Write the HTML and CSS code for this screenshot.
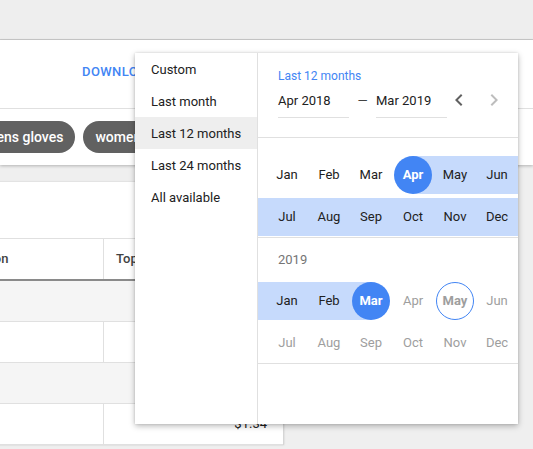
FILE: index.html
```html
<!DOCTYPE html>
<html>
<head>
<meta charset="utf-8">
<link rel="stylesheet" href="styles.css">
</head>
<body>
<div class="topbar"></div>
<div class="card1">
  <div class="card1-head"><span class="download">DOWNLOAD</span></div>
  <div class="chips">
    <span class="chip">womens gloves</span>
    <span class="chip">women gloves</span>
  </div>
</div>
<div class="card2">
  <div class="card2-top"></div>
  <div class="trow thead">
    <div class="c1">Description</div>
    <div class="c2">Top</div>
  </div>
  <div class="trow group"></div>
  <div class="trow"><div class="c1"></div><div class="c2"></div></div>
  <div class="trow group"></div>
  <div class="trow"><div class="c1"></div><div class="c2 num">$1.34</div></div>
</div>

<div class="popup">
  <div class="menu">
    <div class="item">Custom</div>
    <div class="item">Last month</div>
    <div class="item active">Last 12 months</div>
    <div class="item">Last 24 months</div>
    <div class="item">All available</div>
  </div>
  <div class="panel">
    <div class="head">
      <div class="label">Last 12 months</div>
      <div class="inputs">
        <div class="field">Apr 2018</div>
        <div class="dash">—</div>
        <div class="field">Mar 2019</div>
        <span class="icon dark"><svg viewBox="0 0 24 24" width="24" height="24"><path d="M15.41 7.41L14 6l-6 6 6 6 1.41-1.41L10.83 12z"/></svg></span>
        <span class="icon light"><svg viewBox="0 0 24 24" width="24" height="24"><path d="M10 6L8.59 7.41 13.17 12l-4.58 4.59L10 18l6-6z"/></svg></span>
      </div>
    </div>
    <div class="scroll">
      <div class="year first">
        <div class="mrow">
          <span class="pad"></span>
          <span class="cell"><span class="m">Jan</span></span>
          <span class="cell"><span class="m">Feb</span></span>
          <span class="cell"><span class="m">Mar</span></span>
          <span class="cell start"><span class="m sel">Apr</span></span>
          <span class="cell in"><span class="m">May</span></span>
          <span class="cell in"><span class="m">Jun</span></span>
        </div>
        <div class="mrow">
          <span class="pad band"></span>
          <span class="cell in"><span class="m">Jul</span></span>
          <span class="cell in"><span class="m">Aug</span></span>
          <span class="cell in"><span class="m">Sep</span></span>
          <span class="cell in"><span class="m">Oct</span></span>
          <span class="cell in"><span class="m">Nov</span></span>
          <span class="cell in"><span class="m">Dec</span></span>
        </div>
      </div>
      <div class="year">
        <div class="ylabel">2019</div>
        <div class="mrow">
          <span class="pad band"></span>
          <span class="cell in"><span class="m">Jan</span></span>
          <span class="cell in"><span class="m">Feb</span></span>
          <span class="cell end"><span class="m sel">Mar</span></span>
          <span class="cell"><span class="m off">Apr</span></span>
          <span class="cell"><span class="m off today">May</span></span>
          <span class="cell"><span class="m off">Jun</span></span>
        </div>
        <div class="mrow">
          <span class="pad"></span>
          <span class="cell"><span class="m off">Jul</span></span>
          <span class="cell"><span class="m off">Aug</span></span>
          <span class="cell"><span class="m off">Sep</span></span>
          <span class="cell"><span class="m off">Oct</span></span>
          <span class="cell"><span class="m off">Nov</span></span>
          <span class="cell"><span class="m off">Dec</span></span>
        </div>
      </div>
    </div>
  </div>
</div>
</body>
</html>
```
FILE: styles.css
```css
* { box-sizing: border-box; }
html, body { margin: 0; padding: 0; }
body {
  width: 533px;
  height: 449px;
  overflow: hidden;
  background: #efefef;
  font-family: Roboto, "Liberation Sans", sans-serif;
  color: #212121;
  position: relative;
}
.topbar {
  height: 40px;
  background: #eeeeee;
  border-bottom: 1px solid #cccccc;
}
.card1 {
  background: #fff;
  height: 125px;
  box-shadow: 0 1px 3px rgba(0,0,0,0.25);
  position: relative;
}
.card1-head {
  height: 69px;
  border-bottom: 1px solid #e0e0e0;
  padding: 24px 0 0 82px;
}
.download {
  display: block;
  font-size: 13px;
  line-height: 16px;
  font-weight: 500;
  color: #4285f4;
  letter-spacing: 0.4px;
}
.chips {
  display: flex;
  gap: 8px;
  padding-top: 12px;
  margin-left: -46px;
  white-space: nowrap;
}
.chip {
  height: 32px;
  line-height: 32px;
  padding: 0 12px;
  border-radius: 16px;
  background: #616161;
  color: #fff;
  font-size: 14px;
  font-weight: 500;
}
.card2 {
  margin-top: 17px;
  margin-left: -70px;
  width: 354px;
  background: #fff;
  border-right: 1px solid #d6d6d6;
  box-shadow: 0 0 2px rgba(0,0,0,0.15);
}
.card2-top {
  height: 57px;
  border-bottom: 1px solid #e0e0e0;
}
.trow {
  display: flex;
  height: 41px;
  border-bottom: 1px solid #e0e0e0;
}
.trow.thead {
  height: 42px;
  border-bottom: 2px solid #8a8a8a;
  font-size: 13px;
  font-weight: 500;
  color: #424242;
}
.trow.group { background: #f5f5f5; }
.c1 {
  width: 174px;
  border-right: 1px solid #e0e0e0;
  padding-left: 12px;
  line-height: 40px;
}
.c2 {
  flex: 1;
  padding: 0 16px 0 12px;
  line-height: 40px;
}
.c2.num { text-align: right; font-size: 13px; }

.popup {
  position: absolute;
  left: 135px;
  top: 53px;
  width: 383px;
  height: 371px;
  background: #fff;
  display: flex;
  box-shadow: 0 2px 6px rgba(0,0,0,0.28), 0 0 2px rgba(0,0,0,0.12);
}
.menu {
  width: 123px;
  border-right: 1px solid #e0e0e0;
}
.item {
  height: 32px;
  line-height: 33px;
  padding-left: 16px;
  font-size: 13px;
  color: #212121;
}
.item.active { background: #eeeeee; }
.panel {
  width: 260px;
  display: flex;
  flex-direction: column;
}
.head {
  height: 85px;
  border-bottom: 1px solid #e0e0e0;
  padding: 15px 12px 0 20px;
}
.label {
  font-size: 12px;
  line-height: 16px;
  color: #4285f4;
}
.inputs {
  display: flex;
  align-items: flex-start;
}
.field {
  width: 71px;
  height: 34px;
  line-height: 33px;
  border-bottom: 1px solid #e0e0e0;
  font-size: 13px;
  color: #212121;
}
.dash {
  width: 27px;
  line-height: 33px;
  text-align: center;
  font-size: 13px;
  color: #424242;
}
.icon {
  width: 24px;
  height: 24px;
  margin-top: 4px;
  display: block;
}
.icon svg { display: block; }
.icon.dark { fill: #616161; }
.icon.light { fill: #bdbdbd; margin-left: 11px; }
.scroll {
  height: 286px;
  overflow: hidden;
}
.year {
  border-bottom: 1px solid #e0e0e0;
  padding-bottom: 1px;
}
.year.first { padding-top: 18px; }
.ylabel {
  height: 44px;
  line-height: 44px;
  padding-left: 20px;
  font-size: 13px;
  color: #757575;
}
.mrow {
  display: flex;
  height: 38px;
}
.mrow + .mrow { margin-top: 4px; }
.pad { width: 8px; flex: none; }
.band { background: #c6dafc; }
.cell {
  width: 42px;
  flex: none;
  height: 38px;
  display: flex;
  justify-content: center;
}
.cell.in { background: #c6dafc; }
.cell.start { background: linear-gradient(to right, transparent 50%, #c6dafc 50%); }
.cell.end { background: linear-gradient(to right, #c6dafc 50%, transparent 50%); }
.m {
  width: 38px;
  height: 38px;
  line-height: 38px;
  border-radius: 50%;
  text-align: center;
  font-size: 13px;
  color: #212121;
}
.m.sel {
  background: #4285f4;
  color: #fff;
  font-weight: 700;
}
.m.off { color: #9e9e9e; }
.m.today {
  border: 1px solid #4285f4;
  line-height: 36px;
  font-weight: 700;
}
```
